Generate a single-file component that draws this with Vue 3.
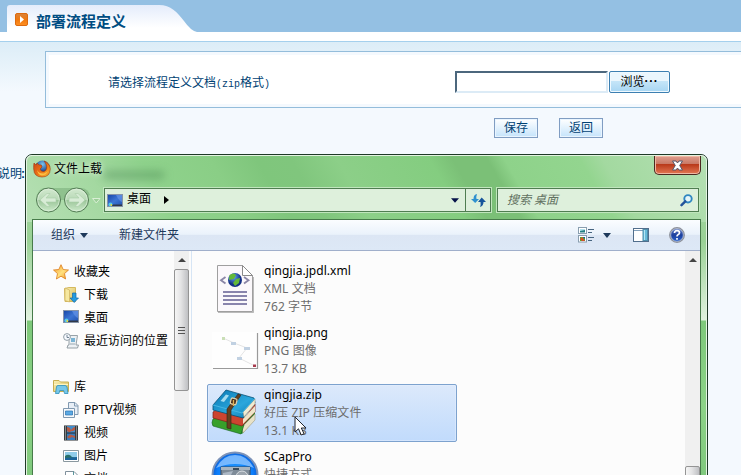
<script setup>
const favorites = [
  { icon: 'download', label: '下载' },
  { icon: 'desktop', label: '桌面' },
  { icon: 'recent', label: '最近访问的位置' }
]
const libraries = [
  { icon: 'doc', label: 'PPTV视频' },
  { icon: 'film', label: '视频' },
  { icon: 'picture', label: '图片' },
  { icon: 'file', label: '文档' }
]
const files = [
  { icon: 'xml', name: 'qingjia.jpdl.xml', kind: 'XML 文档', size: '762 字节' },
  { icon: 'png', name: 'qingjia.png', kind: 'PNG 图像', size: '13.7 KB' },
  { icon: 'zip', name: 'qingjia.zip', kind: '好压 ZIP 压缩文件', size: '13.1 KB', selected: true },
  { icon: 'cap', name: 'SCapPro', kind: '快捷方式' }
]
</script>

<template>
  <div class="page">
    <header class="top">
      <div class="tab">
        <svg class="tab-bg" width="190" height="27" viewBox="0 0 190 27">
          <defs>
            <linearGradient id="tabg" x1="0" y1="0" x2="0" y2="1">
              <stop offset="0" stop-color="#e4ecfb" /><stop offset=".85" stop-color="#fff" />
            </linearGradient>
          </defs>
          <path d="M0 27V3Q0 0 3 0H152C164 0 170 7 177 16Q184 26 190 27Z" fill="url(#tabg)" />
        </svg>
        <svg class="bullet" width="13" height="13" viewBox="0 0 13 13">
          <defs>
            <linearGradient id="org" x1="0" y1="0" x2="0" y2="1">
              <stop offset="0" stop-color="#d9823c" /><stop offset=".5" stop-color="#f0780f" /><stop offset="1" stop-color="#ff9022" />
            </linearGradient>
          </defs>
          <rect x=".5" y=".5" width="12" height="12" rx="1.5" fill="url(#org)" stroke="#dc6a10" />
          <path d="M5 3L9 6.5L5 10Z" fill="#fff" />
        </svg>
        <h1>部署流程定义</h1>
      </div>
    </header>
    <div class="strip"></div>
    <main class="body">
      <section class="panel">
        <div class="panel-in">
          <label>请选择流程定义文档<span class="mono">(zip</span>格式<span class="mono">)</span></label>
          <div class="upload"><div class="field"></div><button class="browse">浏览<span class="dots">···</span></button></div>
        </div>
      </section>
      <div class="actions"><button>保存</button><button>返回</button></div>
      <div class="note">说明<span class="colon">:</span></div>
    </main>

    <div class="dialog">
      <div class="glass">
        <div class="titlebar">
          <svg width="18" height="18" viewBox="0 0 18 18">
            <defs>
              <radialGradient id="ffb" cx=".5" cy=".25"><stop offset="0" stop-color="#7bc4ef" /><stop offset="1" stop-color="#18418c" /></radialGradient>
              <linearGradient id="ffo" x1="0" y1="0" x2="1" y2="1"><stop offset="0" stop-color="#c8401a" /><stop offset=".55" stop-color="#ee7514" /><stop offset="1" stop-color="#f6bd35" /></linearGradient>
            </defs>
            <circle cx="9.500" cy="8" r="7.500" fill="url(#ffb)" />
            <path d="M1 3L3 5L4 3L6 5Q9 4 9 7L7 9Q8 12 11 11.500Q15 10 13 4Q12 2 11 1Q17 3 17.300 9Q17 17 9 17Q1 17 .7 9Q.5 5 1 3Z" fill="url(#ffo)" stroke="#9d3813" stroke-width=".6" />
            <path d="M4 10Q6 14 11 13.500Q14 13 15 10Q14 15 9 15.500Q5 15 4 10Z" fill="#fbc044" />
          </svg>
          <span class="dtitle">文件上载</span>
          <div class="ghost"></div>
          <div class="close">
            <svg width="13" height="11" viewBox="0 0 13 11"><path d="M1.500 1H5L6.500 3L8 1H11.500L8.700 5.500L11.500 10H8L6.500 8L5 10H1.500L4.300 5.500Z" fill="#fff" stroke="#56576a" /></svg>
          </div>
        </div>
        <div class="nav">
          <svg class="arrows" width="68" height="28" viewBox="0 0 68 28">
            <defs><linearGradient id="orb" x1="0" y1="0" x2="0" y2="1"><stop offset="0" stop-color="#d3e9d0" /><stop offset=".48" stop-color="#b9dab7" /><stop offset=".52" stop-color="#9cc69a" /><stop offset="1" stop-color="#cdebcb" /></linearGradient></defs>
            <path d="M10 2H48Q54 3 56 9L42 14H14L3 9Q5 3 10 2Z" fill="#80b37f" opacity=".65" />
            <g fill="url(#orb)" stroke="#527b53"><circle cx="14.500" cy="14" r="12" /><circle cx="42.500" cy="14" r="12" /></g>
            <g fill="none" stroke="#e1f2df" opacity=".6"><circle cx="14.500" cy="14" r="10.800" /><circle cx="42.500" cy="14" r="10.800" /></g>
            <g fill="#d8ecd6" stroke="#a9cda7" stroke-width=".6"><path d="M6 14L13 7.500H16L12 12H22V16H12L16 20.500H13Z" /><path d="M51 14L44 7.500H41L45 12H35V16H45L41 20.500H44Z" /></g>
            <path d="M58.500 12.500H66L62.300 17Z" fill="#9cce98" stroke="#d9efd5" />
          </svg>
          <div class="address">
            <svg width="16" height="13" viewBox="0 0 16 13"><use href="#i-desktop" /></svg>
            <span class="crumb">桌面</span>
            <svg class="bc" width="5" height="8" viewBox="0 0 5 8"><path d="M0 0L5 4L0 8Z" fill="#000" /></svg>
            <svg class="drop" width="8" height="5" viewBox="0 0 9 5"><path d="M0 0H9L4.500 5Z" fill="#06134a" /></svg>
            <div class="refresh">
              <svg width="15" height="13" viewBox="0 0 15 13">
                <path d="M6 0Q2.500 .5 2.500 5H0L4.200 9L8 5H5.500Q5 2.500 6 0Z" fill="#2f91cf" />
                <path d="M9 13Q12.500 12 12.500 8H15L10.700 3.500L7 8H9.500Q10 10.500 9 13Z" fill="#17559b" />
              </svg>
            </div>
          </div>
          <div class="search">
            <span>搜索 桌面</span>
            <svg width="13" height="13" viewBox="0 0 13 13"><circle cx="8" cy="4.800" r="3.700" fill="#e5f6fa" stroke="#3187c1" stroke-width="1.900" /><path d="M5.300 7.300L1.500 11.200" stroke="#24549b" stroke-width="2.400" stroke-linecap="round" /></svg>
          </div>
        </div>
        <div class="client">
          <div class="toolbar">
            <span class="t1">组织</span><i class="tri"></i><span class="t2">新建文件夹</span>
            <div class="tools">
              <svg width="17" height="16" viewBox="0 0 17 16">
                <g fill="#fff" stroke="#899eaf"><rect x=".5" y=".5" width="8" height="6" /><rect x=".5" y="8.500" width="8" height="6.500" /></g>
                <path d="M2 2H7V5H2Z" fill="#b2e0ec" /><path d="M2 4L7 3V5.500H2Z" fill="#227e83" /><path d="M2 10H7V14H2Z" fill="#54a72c" /><path d="M2 12L4 10L7 14H4Z" fill="#db4c29" /><path d="M5 10H7V12Z" fill="#174eb0" />
                <path d="M10 2.500H16M10 5.500H14M10 10.500H16M10 13.500H14" stroke="#476580" />
              </svg>
              <i class="tri"></i>
              <svg class="pane" width="16" height="14" viewBox="0 0 16 14"><rect x=".5" y=".5" width="15" height="13" fill="#fff" stroke="#516e8c" /><path d="M1 2.500H10" stroke="#83a1bc" /><rect x="10" y="1.500" width="4.500" height="11" fill="#68bbda" stroke="#4f8fac" /><path d="M11.500 2V12" stroke="#b4e6f4" /></svg>
              <svg width="16" height="16" viewBox="0 0 16 16">
                <defs><linearGradient id="help" x1="0" y1="0" x2="0" y2="1"><stop offset="0" stop-color="#738ccc" /><stop offset=".5" stop-color="#1c3f9d" /><stop offset="1" stop-color="#2763cf" /></linearGradient></defs>
                <circle cx="8" cy="8" r="7.200" fill="url(#help)" stroke="#8e929b" stroke-width="1.500" /><circle cx="8" cy="8" r="6.300" fill="none" stroke="#dce2f0" stroke-width=".6" />
                <path d="M5.500 6Q5.500 3.700 8 3.700Q10.500 3.700 10.500 5.800Q10.500 7 9 7.800Q8 8.300 8 9.500M8 11V12.800" fill="none" stroke="#fff" stroke-width="1.700" />
              </svg>
            </div>
          </div>
          <div class="panes">
            <nav class="side">
              <div class="row group"><svg width="16" height="16" viewBox="0 0 16 16"><use href="#i-star" /></svg><span>收藏夹</span></div>
              <div v-for="f in favorites" :key="f.label" class="row"><svg width="16" height="16" viewBox="0 0 16 16"><use :href="'#i-' + f.icon" /></svg><span>{{ f.label }}</span></div>
              <div class="row group lib"><svg width="16" height="16" viewBox="0 0 16 16"><use href="#i-lib" /></svg><span>库</span></div>
              <div v-for="f in libraries" :key="f.label" class="row"><svg width="16" height="16" viewBox="0 0 16 16"><use :href="'#i-' + f.icon" /></svg><span>{{ f.label }}</span></div>
            </nav>
            <div class="scroll left"><i class="up"></i><div class="thumb"><b></b><b></b><b></b></div></div>
            <div class="list">
              <div v-for="f in files" :key="f.name" class="item" :class="{ selected: f.selected }">
                <svg width="48" height="48" viewBox="0 0 48 48"><use :href="'#i-' + f.icon" /></svg>
                <div class="meta"><p class="name">{{ f.name }}</p><p>{{ f.kind }}</p><p>{{ f.size }}</p></div>
              </div>
            </div>
            <div class="scroll right"><i class="up"></i><div class="thumb"></div></div>
          </div>
        </div>
      </div>
      <svg class="cursor" width="13" height="20" viewBox="0 0 13 20"><path d="M1 1V16L4.500 12.800L7.200 19L10 17.700L7.300 12H12Z" fill="#fff" stroke="#20242c" /></svg>
    </div>

    <svg class="defs" width="0" height="0">
      <defs>
        <linearGradient id="blue" x1="0" y1="0" x2="1" y2="1"><stop offset="0" stop-color="#1745a5" /><stop offset=".5" stop-color="#3c75d4" /><stop offset="1" stop-color="#2050ac" /></linearGradient>
        <linearGradient id="fold" x1="0" y1="0" x2="1" y2="1"><stop offset="0" stop-color="#faf0b5" /><stop offset="1" stop-color="#d9bd59" /></linearGradient>
        <linearGradient id="starg" x1="0" y1="0" x2="1" y2="1"><stop offset="0" stop-color="#f79a28" /><stop offset=".55" stop-color="#ffe180" /><stop offset="1" stop-color="#f1941d" /></linearGradient>
        <linearGradient id="cover" x1="0" y1="0" x2="1" y2="1"><stop offset="0" stop-color="#0878b5" /><stop offset=".6" stop-color="#2ba7dc" /><stop offset="1" stop-color="#0873ad" /></linearGradient>
        <radialGradient id="globe" cx=".4" cy=".3"><stop offset="0" stop-color="#63aaf5" /><stop offset="1" stop-color="#142f86" /></radialGradient>
        <radialGradient id="capg" cx=".5" cy=".5"><stop offset="0" stop-color="#2aa3ff" /><stop offset=".8" stop-color="#0b7dfb" /><stop offset="1" stop-color="#0d62d8" /></radialGradient>
        <g id="i-desktop"><rect x=".5" y=".5" width="15" height="12" fill="url(#blue)" stroke="#8694a8" /><path d="M5 10.500H15V12H5Z" fill="#303848" /><path d="M9 1H15V8Q12 7 9 1" fill="#6c9aea" opacity=".6" /><circle cx="3.500" cy="10.500" r="2" fill="#55cbe6" /><path d="M3.500 10H5V12H3.500Z" fill="#e0d44a" /></g>
        <g id="i-star"><path d="M8 .7L10.200 5.500L15.500 6L11.500 9.600L12.600 15L8 12.200L3.400 15L4.500 9.600L.5 6L5.800 5.500Z" fill="url(#starg)" stroke="#dd7d1c" stroke-width=".8" /></g>
        <g id="i-download"><path d="M1.500 1.500L6 .5H12.500V14.500H2Z" fill="url(#fold)" stroke="#d5b95e" /><path d="M2 1L6.500 3V15L2 13.500Z" fill="#f6e8a0" stroke="#cfb260" stroke-width=".7" /><path d="M9.500 6H13V11H15.500L11.200 15.500L7 11H9.500Z" fill="#249be0" stroke="#126aa9" stroke-width=".7" /></g>
        <g id="i-recent"><path d="M6 2.500H14.500L13 12H15.500L14.500 15H4L5 12H6Z" fill="#edf1f4" stroke="#8d979e" stroke-width=".9" /><path d="M8 5H12V9H8Z" fill="#79b3d4" /><path d="M7 11H12" stroke="#98a8b2" /><circle cx="4" cy="4" r="3.400" fill="#f7faff" stroke="#84939d" stroke-width=".9" /><path d="M4 2V4.500H6" fill="none" stroke="#52677a" stroke-width=".8" /></g>
        <g id="i-lib"><path d="M.5 1.500H6L7.500 3H15.500V12.500H.5Z" fill="url(#fold)" stroke="#c8ae51" /><path d="M1 5.500H15" stroke="#fff5bf" /><path d="M3.500 8Q3.500 6.500 5 6.500H12Q13.500 6.500 14 8L15 14.500H11.500L10.700 11.500H6.700L6 14.500H2.500Z" fill="#77c7e9" stroke="#2e91bd" stroke-width=".8" /></g>
        <g id="i-doc"><path d="M5.500 .5H12L15 3.500V12.500H5.500Z" fill="#e7eef6" stroke="#8199b0" /><path d="M11.500 .5V4H15" fill="none" stroke="#8199b0" /><path d="M.5 6.500H11.500V15.500H.5Z" fill="#f6f9fc" stroke="#8199b0" /><path d="M2.500 9H9.500V13H2.500Z" fill="#5ba9e3" stroke="#2770af" stroke-width=".7" /></g>
        <g id="i-film"><path d="M1 .5H15V15.500H1Z" fill="#25292c" /><path d="M4 1H12V7.500H4Z" fill="#3f8ccc" /><path d="M4 8.500H12V15H4Z" fill="#347dbd" /><path d="M4 2Q7 2 8 5Q10 2 12 2V5Q10 6.500 8.500 6L7 7Q4 7 4 5ZM7 9.500L12 11V13L9 12L6 13.500L4 12Z" fill="#b65a43" /><path d="M2.500 1.500V15M13.500 1.500V15" stroke="#e0e5e5" stroke-width="1.400" stroke-dasharray="1 1" /></g>
        <g id="i-picture"><path d="M.5 2.500H15.500V13.500H.5Z" fill="#fff" stroke="#8a989f" /><path d="M2 4H14V12H2Z" fill="#90cdea" /><path d="M2 8Q6 5 9 9L14 10V12H2Z" fill="#28706a" /><path d="M2 10L14 9V12H2Z" fill="#1b649a" /></g>
        <g id="i-file"><path d="M2.500 .5H11L14.500 4V15.500H2.500Z" fill="#fff" stroke="#80909c" /><path d="M10.500 .5V4.500H14.500M5 5H9M5 8H12" fill="none" stroke="#5a969c" /></g>
        <g id="i-xml"><path d="M6.500 .5H31.500L41.500 10.500V46.500H6.500Z" fill="#fbf8fb" stroke="#9f9f9f" /><path d="M7 47.500H42.500V12" fill="none" stroke="#777" opacity=".5" /><path d="M31.500 .5V10.500H41.500Z" fill="#fff" stroke="#8b8b8b" /><circle cx="24" cy="15" r="7" fill="url(#globe)" /><path d="M18.500 10Q23 7 25 10L23 14L18 15ZM25 14L29 13L28 18L24 21L22 18Z" fill="#63b838" /><path d="M14.500 12L10 15.200L14.500 18.500M33 12L37.500 15.200L33 18.500" fill="none" stroke="#8a85a6" stroke-width="1.800" /><path d="M12 27H36M12 31H36M12 35H36M12 39H36" stroke="#8984ac" stroke-width="2" /></g>
        <g id="i-png"><rect x="1" y="5" width="45" height="36" fill="#fefefe" /><path d="M2 41.500H46.500V6" fill="none" stroke="#9a9a9a" stroke-width="1.200" /><path d="M12 11L23 16L36 21L28 31L44 39" fill="none" stroke="#ddd" stroke-width=".8" /><path d="M11 10H14V13H11Z" fill="#cadfb7" /><path d="M20 15H25V18H20ZM33 20H39V23H33ZM26 30H31V33H26Z" fill="#c1d1e2" /><path d="M42 37.500H45V40H42Z" fill="#a83b4e" /></g>
        <g id="i-zip"><path d="M2 30L20 37L44 22V29L31 45L2 36Z" fill="#278e31" /><path d="M31 38L44 25V31L32 44Z" fill="#e8e2c7" stroke="#9e9a7d" stroke-width=".6" /><path d="M2 30L6 28L33 36L30 45L2 37Q0 34 2 30Z" fill="#37a02a" stroke="#176022" stroke-width=".6" /><path d="M2 23L5 21L34 29L44 15V23L31 37L2 29Z" fill="#cc4430" stroke="#7c2118" stroke-width=".7" /><path d="M32 30L44 17V23L32 35Z" fill="#eee4c8" /><path d="M2 16L15 1L43 9L44 14L32 29L2 21Z" fill="url(#cover)" stroke="#095075" stroke-width=".8" /><path d="M32 23L44 10V15L33 28Z" fill="#f1ebd1" stroke="#8c8c76" stroke-width=".5" /><path d="M2 16L31 24L44 9" fill="none" stroke="#46b6e2" /><path d="M9.500 12L15 5.500L18 6.500L13 13Z" fill="#a2dbf0" /><path d="M27 5L30 6L20 21V40L16 39V20Z" fill="#65411f" stroke="#302116" stroke-width=".6" /><rect x="19.500" y="9.500" width="6" height="6" rx="1.500" fill="#4c301c" stroke="#ddd1ae" stroke-width="1.300" transform="rotate(15 23 13)" /><path d="M22.500 11V17" stroke="#e0b352" stroke-width="1.300" /></g>
        <g id="i-cap"><circle cx="24" cy="24" r="22.500" fill="url(#capg)" stroke="#7d93b8" stroke-width="2" /><path d="M5 17Q12 4 24 4Q36 4 43 17Q24 9 5 17Z" fill="#9acbff" opacity=".75" /><path d="M10 16H39V36H10Z" fill="#7e8b98" stroke="#3d4b5a" /><path d="M10 16H39V19H10Z" fill="#a9b5bf" /><path d="M22 17H28V19H22Z" fill="#3a4b59" /><circle cx="31" cy="26" r="6" fill="#9ca5ae" stroke="#dce1e5" /><path d="M12 22L22 20L17 30H12Z" fill="#acb7c4" /></g>
      </defs>
    </svg>
  </div>
</template>

<style>
body { overflow: hidden; }
</style>
<style scoped>
* { box-sizing: border-box; }
.page { position: relative; width: 741px; height: 475px; overflow: hidden; background: #f4f9fe; color: #004173; font: 12px/16px "Liberation Sans", "Noto Sans CJK SC", sans-serif; }
.top { height: 32px; background: #94c0e3; padding: 5px 0 0 7px; }
.tab { position: relative; display: flex; align-items: center; height: 27px; width: 190px; padding-left: 8px; gap: 8px; }
.tab-bg { position: absolute; left: 0; top: 0; }
.bullet { position: relative; margin-top: 2px; }
h1 { position: relative; margin: 6px 0 0; font-size: 15px; line-height: 20px; font-weight: 700; color: #004d82; white-space: nowrap; }
.strip { height: 10px; background: #fff; border-bottom: 1px solid #a5d0ed; }
.body { height: 433px; padding: 9px 0 0 45px; background: linear-gradient(#dcedf7, #f4f9fe 50px); }
.panel { height: 57px; border: 1px solid #94bddb; border-right: 0; padding: 3px 0 3px 3px; background: #f4f9fe; }
.panel-in { height: 49px; background: #fff; display: flex; align-items: center; padding-left: 59px; }
label { width: 347px; padding-top: 8px; white-space: nowrap; }
.mono { font-family: "Liberation Mono", monospace; font-size: 10px; }
.colon { margin-left: -1px; font-weight: 700; }
.upload { display: flex; gap: 1px; padding-top: 5px; }
.field { width: 153px; height: 22px; background: #fff; border: 2px solid #dcebf6; border-top-color: #4c677d; border-left-color: #4c677d; }
button { font: inherit; padding: 0; margin: 0; display: flex; justify-content: center; align-items: center; }
.browse { width: 61px; height: 22px; color: #000; border: 1px solid #3c7fb1; border-radius: 2px; background: linear-gradient(#eaf6fd 45%, #c5e5f8 46%, #a7d6f3); box-shadow: inset 0 0 0 1px #eff9ff; }
.dots { font-weight: 700; margin-top: -2px; letter-spacing: .6px; }
.actions { display: flex; gap: 21px; padding: 10px 0 0 449px; }
.actions button { width: 44px; height: 20px; color: #004173; border: 1px solid #809dc2; background: linear-gradient(#fff, #c5e4fb); box-shadow: inset 0 0 0 1px #e9f5ff; }
.note { margin: 28px 0 0 -47px; }
.dialog { position: absolute; left: 25px; top: 154px; width: 683px; height: 340px; border: 1px solid #1e3a27; border-radius: 7px 7px 0 0; overflow: hidden; color: #000; font: 12px/18px "Noto Sans", "Noto Sans CJK SC", sans-serif; }
.glass { height: 339px; padding: 0 6px; border: 1px solid #e3f3e1; border-bottom: 0; border-radius: 6px 6px 0 0; background: linear-gradient(60deg, #b6e0b4 0, #a3d8a0 80px, #8fd28c 130px, #8ace86 190px, #7fc67c 230px, #80c67d 260px, #8ccf88 300px, #84cd80 380px, #7bc077 400px, #7bc077 430px, #8ed28a 445px, #93d58f 510px, #a3d9a0 530px, #b4e0b3) 0 0 / 100% 66px no-repeat, linear-gradient(#a6d9a4 0, #99d195 85px, #e0f2df 164px, #7dc87a 165px, #8cd387 250px, #7cc57a); }
.titlebar { height: 32px; display: flex; align-items: flex-start; padding: 4px 0 0 0; }
.dtitle { margin: 0 0 0 3px; line-height: 18px; text-shadow: 0 0 6px #fff; }
.ghost { width: 60px; height: 8px; margin: 11px 0 0 2px; background: #3c7a4866; filter: blur(4px); }
.close { margin: -4px -1px 0 auto; width: 47px; height: 19px; border: 1px solid #4c2820; border-top: 0; border-radius: 0 0 5px 5px; background: linear-gradient(#df9e8f, #c87763 45%, #b93819 46%, #e37854); box-shadow: inset 0 0 0 1px #efb8a4; display: flex; align-items: center; justify-content: center; }
.nav { height: 31px; display: flex; align-items: flex-start; padding-left: 1px; }
.arrows { margin: -2px 2px 0 0; flex: none; }
.address, .search { height: 24px; border: 1px solid #4f7d51; outline: 1px solid #c0e5bd; background: #def0dc; display: flex; align-items: center; }
.address { width: 387px; padding-left: 2px; flex: none; }
.crumb { margin: -2px 0 0 4px; }
.bc { margin-left: 13px; }
.drop { margin-left: auto; margin-right: 6px; }
.refresh { width: 25px; height: 22px; border-left: 1px solid #4f7d51; display: flex; align-items: center; justify-content: center; }
.search { width: 202px; margin-left: 6px; padding: 0 5px 0 9px; justify-content: space-between; color: #627262; font-style: italic; flex: none; }
.client { margin: 0 -1px; height: 281px; border: 1px solid #477b4a; border-bottom: 0; background: #fcfcfc; }
.toolbar { height: 31px; border-bottom: 1px solid #a0afcb; background: linear-gradient(#fbfdff, #eaf2fb 48%, #dce6f4 50%, #dde8f6); display: flex; align-items: center; padding: 0 15px 0 18px; color: #1e395b; }
.tri { width: 0; height: 0; border: 4px solid transparent; border-top: 5px solid #1e395b; border-bottom: 0; }
.t1 { margin-right: 5px; }
.t2 { margin-left: 31px; }
.tools { margin-left: auto; display: flex; align-items: center; }
.tools .tri { margin: 0 22px 0 8px; }
.pane { margin-right: 20px; }
.panes { display: flex; height: 249px; }
.side { width: 141px; padding: 9px 0 0 30px; flex: none; }
.row { height: 23px; display: flex; align-items: center; gap: 5px; white-space: nowrap; }
.row svg { flex: none; }
.row.group { margin-left: -10px; }
.row.lib { margin-top: 23px; }
.scroll { width: 15px; background: #f0f0f0; display: flex; flex-direction: column; align-items: center; flex: none; }
.up { width: 0; height: 0; margin: 7px 0 7px; border: 4px solid transparent; border-bottom: 4px solid #444; border-top: 0; }
.thumb { width: 15px; border: 1px solid #949494; border-radius: 2px; background: linear-gradient(90deg, #f5f5f5, #e4e4e5 45%, #bfc0c3); }
.left .thumb { height: 122px; display: flex; flex-direction: column; align-items: center; justify-content: center; gap: 2px; }
.thumb b { width: 7px; height: 1px; background: #555; }
.right .thumb { height: 40px; margin-top: 197px; }
.list { flex: 1; margin-left: 2px; border-left: 1px solid #d6e5f5; padding: 9px 0 0 15px; display: flex; flex-direction: column; gap: 4px; height: 249px; overflow: hidden; }
.item { width: 250px; height: 58px; flex: none; display: flex; align-items: center; padding-left: 3px; gap: 5px; border: 1px solid transparent; border-radius: 2px; }
.item svg { flex: none; }
.selected { border-color: #7da2ce; background: linear-gradient(#dce9fb, #c1dbfc); box-shadow: inset 0 0 0 1px #e5effd88; }
p { margin: 0; height: 18px; color: #6d6d6d; white-space: nowrap; letter-spacing: .1px; }
.meta .name { color: #000; letter-spacing: .04px; }
.cursor { position: absolute; left: 268px; top: 261px; }
.defs { position: absolute; }
</style>
